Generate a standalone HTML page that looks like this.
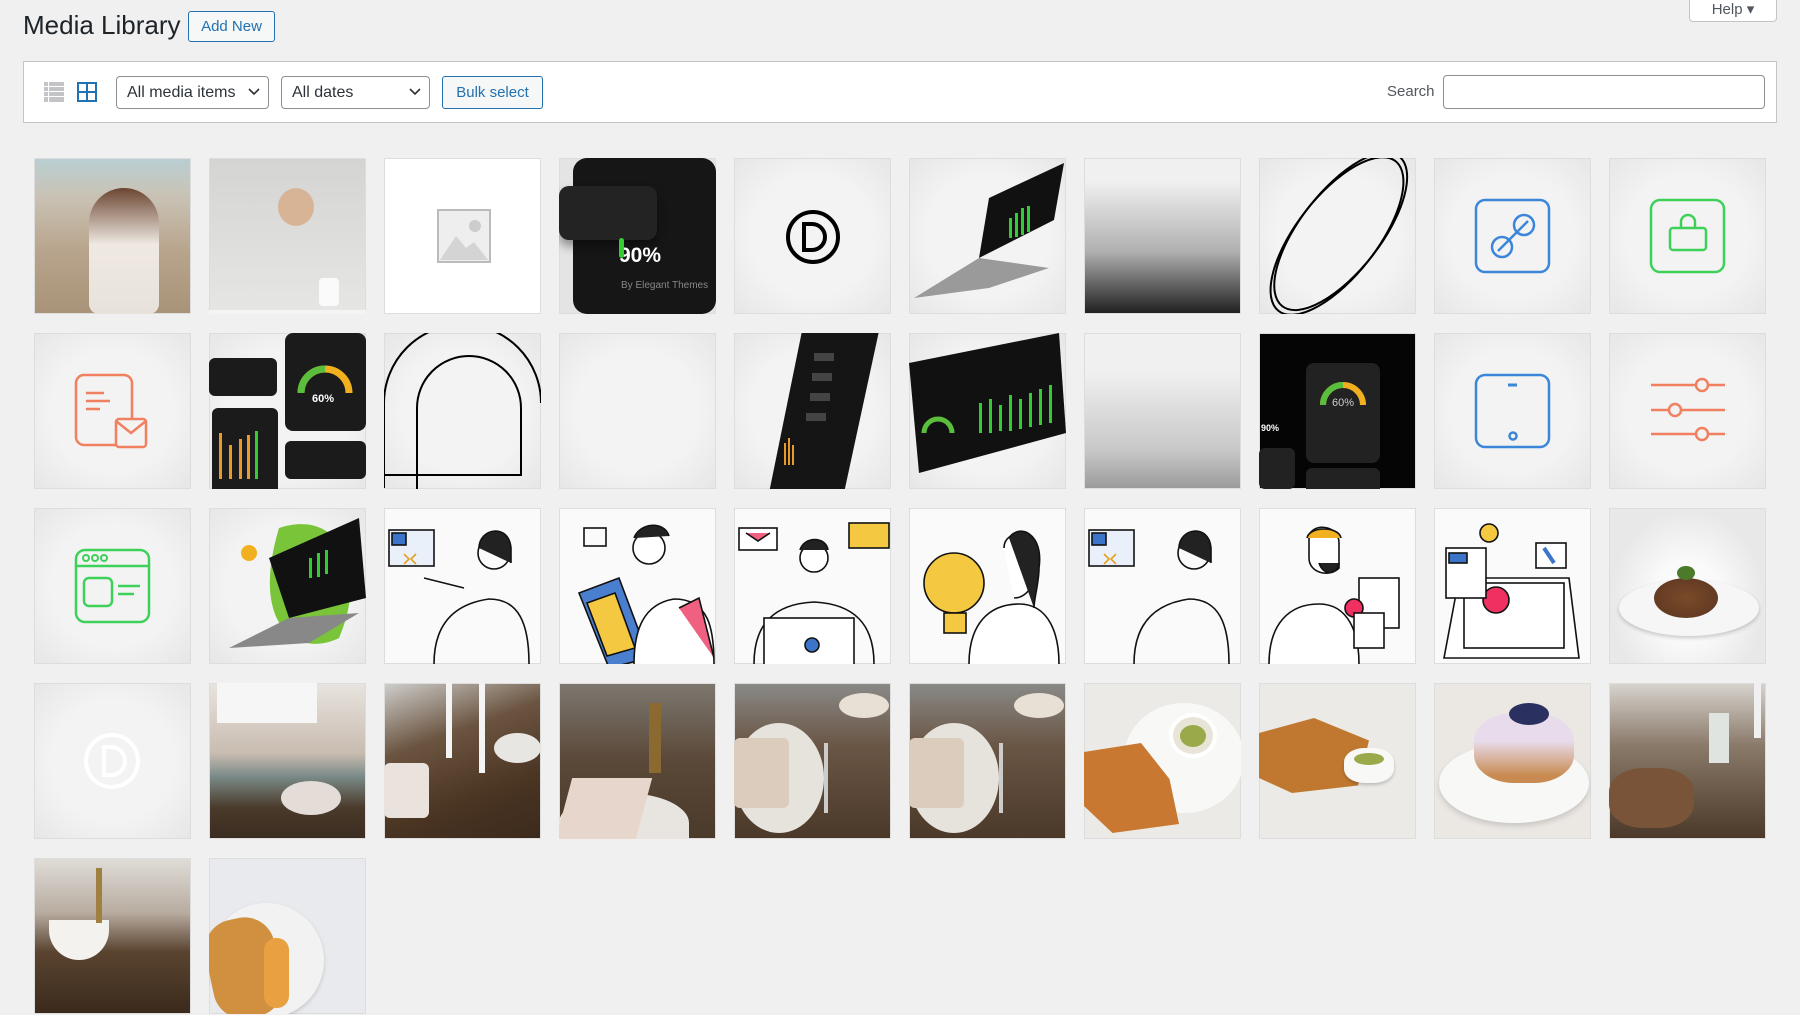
<!DOCTYPE html>
<html><head><meta charset="utf-8"><style>
*{box-sizing:border-box;margin:0;padding:0}
body{width:1800px;height:1015px;overflow:hidden;background:#f0f0f1;font-family:"Liberation Sans",sans-serif;position:relative;color:#1d2327}
.abs{position:absolute}
h1{position:absolute;left:23px;top:10px;font-size:26px;font-weight:400;color:#1d2327}
.btn{position:absolute;border:1.5px solid #2271b1;border-radius:3px;color:#2271b1;font-size:15px;display:flex;align-items:center;justify-content:center;background:#f6f7f7}
.help{position:absolute;left:1689px;top:-4px;width:88px;height:26px;background:#fff;border:1px solid #c3c4c7;border-radius:0 0 4px 4px;font-size:15px;color:#50575e;text-align:center;padding-top:3px}
.bar{position:absolute;left:23px;top:61px;width:1754px;height:62px;background:#fff;border:1px solid #c3c4c7}
.sel{position:absolute;top:76px;height:33px;border:1px solid #8c8f94;border-radius:4px;background:#fff;font-size:16px;color:#2c3338;padding:7px 0 0 10px}
.sel svg{position:absolute;right:8px;top:11px}
.t{position:absolute;width:157px;height:156px;overflow:hidden;background:#efefef;box-shadow:inset 0 0 0 1px #ddd}
.lt{background:radial-gradient(ellipse at center,#f3f3f3 55%,#e6e6e6 100%)}
</style></head><body>
<h1>Media Library</h1>
<div class="btn" style="left:188px;top:11px;width:87px;height:31px;font-size:15px">Add New</div>
<div class="help">Help ▾</div>
<div class="bar"></div>
<svg class="abs" style="left:44px;top:82px" width="20" height="20" viewBox="0 0 20 20"><g fill="#c3c4c7"><rect x="0" y="0" width="20" height="4"/><rect x="0" y="5" width="20" height="4"/><rect x="0" y="10" width="20" height="4"/><rect x="0" y="15" width="20" height="5"/></g><g fill="#fff"><rect x="4" y="0" width="1" height="20"/></g></svg>
<svg class="abs" style="left:77px;top:82px" width="20" height="20" viewBox="0 0 20 20"><rect x="1" y="1" width="18" height="18" fill="none" stroke="#2271b1" stroke-width="2"/><path d="M10 1V19M1 10H19" stroke="#2271b1" stroke-width="2"/></svg>
<div class="sel" style="left:116px;width:153px">All media items<svg width="12" height="8"><path d="M1 1l5 5 5-5" stroke="#2c3338" stroke-width="1.6" fill="none"/></svg></div>
<div class="sel" style="left:281px;width:149px">All dates<svg width="12" height="8"><path d="M1 1l5 5 5-5" stroke="#2c3338" stroke-width="1.6" fill="none"/></svg></div>
<div class="btn" style="left:442px;top:76px;width:101px;height:33px;font-size:15px">Bulk select</div>
<div class="abs" style="left:1387px;top:83px;font-size:15px;color:#50575e">Search</div>
<div class="abs" style="left:1443px;top:75px;width:322px;height:34px;border:1px solid #8c8f94;border-radius:4px;background:#fff"></div>

<!-- row 1 -->
<div class="t" style="left:34px;top:158px;background:linear-gradient(180deg,#b9cfd3 0%,#c9c2b4 25%,#b8a48c 60%,#a89378 100%)"><div class="abs" style="left:55px;top:30px;width:70px;height:126px;border-radius:35px 35px 10px 10px;background:linear-gradient(180deg,#6b4631 0%,#efe9e2 45%,#e8e2dc 100%)"></div></div>
<div class="t" style="left:209px;top:158px;background:linear-gradient(180deg,#d4d4d2,#e6e6e4)"><div class="abs" style="left:69px;top:30px;width:36px;height:38px;border-radius:50%;background:#d8b496"></div><div class="abs" style="left:110px;top:120px;width:20px;height:28px;border-radius:4px;background:#fafafa"></div><div class="abs" style="left:0;top:152px;width:157px;height:4px;background:#f4f4f4"></div></div>
<div class="t" style="left:384px;top:158px;background:#fff"><svg class="abs" style="left:52px;top:50px" width="56" height="56"><rect x="2" y="2" width="52" height="52" fill="#eee" stroke="#bbb" stroke-width="2"/><circle cx="39" cy="18" r="6" fill="#ccc"/><path d="M4 52L20 28 30 40 38 34 52 52Z" fill="#d4d4d4"/></svg></div>
<div class="t" style="left:559px;top:158px;background:#e4e4e4"><div class="abs" style="left:14px;top:0;width:143px;height:156px;border-radius:14px;background:#161616"></div><div class="abs" style="left:0;top:28px;width:98px;height:54px;border-radius:10px;background:#232323;box-shadow:0 6px 10px rgba(0,0,0,.4)"></div><div class="abs" style="left:60px;top:86px;color:#fff;font-weight:700;font-size:21px">90%</div><div class="abs" style="left:62px;top:122px;color:#888;font-size:10px">By Elegant Themes</div><div class="abs" style="left:60px;top:80px;width:5px;height:20px;background:#3c3;border-radius:3px"></div></div>
<div class="t lt" style="left:734px;top:158px"><svg class="abs" style="left:50px;top:50px" width="58" height="58"><circle cx="29" cy="29" r="25" fill="none" stroke="#000" stroke-width="4"/><path d="M20 16h8a13 13 0 0 1 0 26h-8z" fill="none" stroke="#000" stroke-width="4"/></svg></div>
<div class="t lt" style="left:909px;top:158px"><svg class="abs" width="157" height="156"><path d="M70 100L145 62 155 5 80 40Z" fill="#111"/><path d="M5 140L70 100 140 110 80 130Z" fill="#9a9a9a"/><g fill="#3c3"><rect x="100" y="60" width="3" height="20"/><rect x="106" y="55" width="3" height="24"/><rect x="112" y="50" width="3" height="27"/><rect x="118" y="48" width="3" height="26"/></g></svg></div>
<div class="t" style="left:1084px;top:158px;background:linear-gradient(180deg,#f0f0f0 15%,#b0b0b0 60%,#1e1e1e 100%)"></div>
<div class="t lt" style="left:1259px;top:158px"><svg width="157" height="156"><ellipse cx="78" cy="78" rx="40" ry="95" transform="rotate(38 78 78)" fill="none" stroke="#000" stroke-width="2"/><ellipse cx="78" cy="72" rx="40" ry="95" transform="rotate(38 78 78)" fill="none" stroke="#000" stroke-width="2"/></svg></div>
<div class="t lt" style="left:1434px;top:158px"><svg width="157" height="156"><rect x="42" y="42" width="73" height="72" rx="9" fill="none" stroke="#3b86d9" stroke-width="2.5"/><circle cx="90" cy="67" r="10" fill="none" stroke="#3b86d9" stroke-width="2.5"/><circle cx="68" cy="89" r="10" fill="none" stroke="#3b86d9" stroke-width="2.5"/><path d="M64 93L94 63" stroke="#3b86d9" stroke-width="2.5"/></svg></div>
<div class="t lt" style="left:1609px;top:158px"><svg width="157" height="156"><rect x="42" y="42" width="73" height="72" rx="9" fill="none" stroke="#3ed15a" stroke-width="2.5"/><rect x="61" y="70" width="36" height="22" rx="3" fill="none" stroke="#3ed15a" stroke-width="2.5"/><path d="M72 70v-6a7 7 0 0 1 14 0v6" fill="none" stroke="#3ed15a" stroke-width="2.5"/></svg></div>

<!-- row 2 -->
<div class="t lt" style="left:34px;top:333px"><svg width="157" height="156"><rect x="42" y="42" width="56" height="70" rx="8" fill="none" stroke="#f08060" stroke-width="2.5"/><path d="M52 60h18M52 68h24M52 76h14" stroke="#f08060" stroke-width="2.5"/><rect x="82" y="86" width="30" height="28" rx="3" fill="#f3f3f3" stroke="#f08060" stroke-width="2.5"/><path d="M82 88l15 12 15-12" fill="none" stroke="#f08060" stroke-width="2.5"/></svg></div>
<div class="t lt" style="left:209px;top:333px"><div class="abs" style="left:76px;top:0;width:81px;height:98px;background:#1b1b1b;border-radius:8px"></div><div class="abs" style="left:0;top:25px;width:68px;height:38px;background:#1b1b1b;border-radius:6px"></div><div class="abs" style="left:3px;top:75px;width:66px;height:120px;background:#1b1b1b;border-radius:6px"></div><div class="abs" style="left:76px;top:108px;width:81px;height:38px;background:#1b1b1b;border-radius:6px"></div><svg class="abs" width="157" height="156"><path d="M92 60a24 24 0 0 1 48 0" fill="none" stroke="#f0b020" stroke-width="7"/><path d="M92 60a24 24 0 0 1 24-24" fill="none" stroke="#5bbd3c" stroke-width="7"/><g fill="#e89a2a"><rect x="10" y="100" width="3" height="46"/><rect x="20" y="112" width="3" height="34"/><rect x="30" y="106" width="3" height="40"/><rect x="38" y="102" width="3" height="44"/></g><rect x="46" y="98" width="3" height="48" fill="#3c3"/></svg><div class="abs" style="left:103px;top:60px;color:#fff;font-size:11px;font-weight:700">60%</div></div>
<div class="t lt" style="left:384px;top:333px"><svg width="157" height="156"><path d="M0 155V70a68 68 0 0 1 157 0" fill="none" stroke="#000" stroke-width="2"/><path d="M0 142H137V75a52 52 0 0 0-104 0V156" fill="none" stroke="#000" stroke-width="2"/></svg></div>
<div class="t lt" style="left:559px;top:333px"></div>
<div class="t lt" style="left:734px;top:333px"><svg width="157" height="156"><path d="M35 160L68 -2 145 -2 110 160Z" fill="#151515"/><g fill="#e89a2a"><rect x="50" y="110" width="2" height="22"/><rect x="54" y="105" width="2" height="27"/><rect x="58" y="112" width="2" height="20"/></g><g fill="#444"><rect x="80" y="20" width="20" height="8"/><rect x="78" y="40" width="20" height="8"/><rect x="76" y="60" width="20" height="8"/><rect x="72" y="80" width="20" height="8"/></g></svg></div>
<div class="t lt" style="left:909px;top:333px"><svg width="157" height="156"><path d="M0 30L150 0 157 100 10 140Z" fill="#111"/><g fill="#3c3"><rect x="70" y="70" width="3" height="30"/><rect x="80" y="66" width="3" height="34"/><rect x="90" y="72" width="3" height="26"/><rect x="100" y="62" width="3" height="36"/><rect x="110" y="66" width="3" height="30"/><rect x="120" y="60" width="3" height="34"/><rect x="130" y="56" width="3" height="36"/><rect x="140" y="52" width="3" height="38"/></g><path d="M15 100a14 14 0 0 1 28 0" fill="none" stroke="#5bbd3c" stroke-width="5"/></svg></div>
<div class="t" style="left:1084px;top:333px;background:linear-gradient(180deg,#f0f0f0 25%,#c8c8c8 75%,#9a9a9a 100%)"></div>
<div class="t" style="left:1259px;top:333px;background:#050505"><div class="abs" style="left:47px;top:30px;width:74px;height:100px;background:#222;border-radius:8px"></div><div class="abs" style="left:0;top:115px;width:36px;height:41px;background:#222;border-radius:6px"></div><div class="abs" style="left:47px;top:135px;width:74px;height:30px;background:#222;border-radius:6px"></div><svg class="abs" width="157" height="156"><path d="M64 72a20 20 0 0 1 40 0" fill="none" stroke="#f0b020" stroke-width="6"/><path d="M64 72a20 20 0 0 1 20-20" fill="none" stroke="#5bbd3c" stroke-width="6"/></svg><div class="abs" style="left:73px;top:64px;color:#ccc;font-size:11px">60%</div><div class="abs" style="left:2px;top:90px;color:#fff;font-size:9px;font-weight:700">90%</div></div>
<div class="t lt" style="left:1434px;top:333px"><svg width="157" height="156"><rect x="42" y="42" width="73" height="72" rx="9" fill="none" stroke="#3b86d9" stroke-width="2.5"/><path d="M74 52h9" stroke="#3b86d9" stroke-width="3"/><circle cx="79" cy="103" r="3.5" fill="none" stroke="#3b86d9" stroke-width="2.5"/></svg></div>
<div class="t lt" style="left:1609px;top:333px"><svg width="157" height="156"><g stroke="#f08060" stroke-width="2.5" fill="#f2f2f2"><path d="M42 52h74M42 77h74M42 101h74"/><circle cx="93" cy="52" r="6"/><circle cx="66" cy="77" r="6"/><circle cx="93" cy="101" r="6"/></g></svg></div>

<!-- row 3 -->
<div class="t lt" style="left:34px;top:508px"><svg width="157" height="156"><rect x="42" y="42" width="73" height="72" rx="9" fill="none" stroke="#3ed15a" stroke-width="2.5"/><path d="M42 58h73" stroke="#3ed15a" stroke-width="2.5"/><circle cx="52" cy="50" r="3" fill="none" stroke="#3ed15a" stroke-width="2"/><circle cx="61" cy="50" r="3" fill="none" stroke="#3ed15a" stroke-width="2"/><circle cx="70" cy="50" r="3" fill="none" stroke="#3ed15a" stroke-width="2"/><rect x="50" y="70" width="28" height="28" rx="5" fill="none" stroke="#3ed15a" stroke-width="2.5"/><path d="M84 78h22M84 86h16" stroke="#3ed15a" stroke-width="2.5"/></svg></div>
<div class="t lt" style="left:209px;top:508px"><svg width="157" height="156"><path d="M70 20C130 0 160 60 130 130 90 150 40 120 70 20Z" fill="#7ac43a"/><path d="M60 50L150 10 157 90 80 110Z" fill="#111"/><path d="M20 140L80 110 150 105 100 135Z" fill="#888"/><circle cx="40" cy="45" r="8" fill="#f0b020"/><g fill="#3c3"><rect x="100" y="50" width="3" height="20"/><rect x="108" y="45" width="3" height="24"/><rect x="116" y="42" width="3" height="24"/></g></svg></div>
<div class="t" style="left:384px;top:508px;background:#fafafa"><svg width="157" height="156" fill="none" stroke="#111" stroke-width="1.6"><rect x="5" y="22" width="45" height="36" fill="#eaf0fa"/><rect x="8" y="25" width="14" height="12" fill="#3b74c9"/><path d="M20 46l5 5-5 5M32 46l-5 5 5 5" stroke="#e8a020"/><path d="M50 156c0-40 20-60 55-65 30 0 40 25 40 65"/><circle cx="110" cy="45" r="16"/><path d="M95 40c0-20 30-25 32 0v15" fill="#222"/><path d="M40 70l40 10"/></svg></div>
<div class="t" style="left:559px;top:508px;background:#fafafa"><svg width="157" height="156" fill="none" stroke="#111" stroke-width="1.6"><path d="M20 85l40-15 30 80-40 10Z" fill="#4a7fd0"/><path d="M28 95l28-10 20 55-28 8Z" fill="#f5c842"/><path d="M75 156c0-35 10-60 40-65 35 0 40 30 40 65" fill="#fff"/><path d="M120 100l20-10 15 60" fill="#f06080"/><circle cx="90" cy="40" r="16" fill="#fff"/><path d="M75 30c5-15 30-18 35-2" fill="#222"/><rect x="25" y="20" width="22" height="18"/></svg></div>
<div class="t" style="left:734px;top:508px;background:#fafafa"><svg width="157" height="156" fill="none" stroke="#111" stroke-width="1.6"><path d="M20 156c0-40 20-60 60-62 40 2 60 22 60 62"/><rect x="30" y="110" width="90" height="50" fill="#fff"/><circle cx="78" cy="137" r="7" fill="#3b74c9"/><circle cx="80" cy="50" r="14" fill="#fff"/><path d="M66 42c4-14 26-14 28 0" fill="#222"/><rect x="5" y="20" width="38" height="22" fill="#fff"/><path d="M12 25l12 8 12-8" fill="#f06080"/><rect x="115" y="15" width="40" height="25" fill="#f5c842"/></svg></div>
<div class="t" style="left:909px;top:508px;background:#fafafa"><svg width="157" height="156" fill="none" stroke="#111" stroke-width="1.6"><path d="M60 156c0-40 20-60 50-60 30 0 40 30 40 60" fill="#fff"/><circle cx="45" cy="75" r="30" fill="#f5c842"/><rect x="35" y="105" width="22" height="20" fill="#f5c842"/><path d="M95 40c0-20 35-20 35 10 0 20-10 40-25 40" fill="#fff"/><path d="M100 30c10-15 35-5 30 30 0 15-5 30-5 40" fill="#222"/></svg></div>
<div class="t" style="left:1084px;top:508px;background:#fafafa"><svg width="157" height="156" fill="none" stroke="#111" stroke-width="1.6"><rect x="5" y="22" width="45" height="36" fill="#eaf0fa"/><rect x="8" y="25" width="14" height="12" fill="#3b74c9"/><path d="M20 46l5 5-5 5M32 46l-5 5 5 5" stroke="#e8a020"/><path d="M50 156c0-40 20-60 55-65 30 0 40 25 40 65"/><circle cx="110" cy="45" r="16"/><path d="M95 40c0-20 30-25 32 0v15" fill="#222"/></svg></div>
<div class="t" style="left:1259px;top:508px;background:#fafafa"><svg width="157" height="156" fill="none" stroke="#111" stroke-width="1.6"><path d="M10 156c0-40 20-60 50-60 30 0 40 30 40 60" fill="#fff"/><path d="M50 30c0-15 30-15 30 5v25c-10 10-30 5-30-10z" fill="#fff"/><path d="M48 30c2-12 32-12 34 0" fill="#f0b020"/><path d="M60 55c5 15 20 10 20 0" fill="#222"/><rect x="100" y="70" width="40" height="50" fill="#fff"/><circle cx="95" cy="100" r="9" fill="#f03060"/><rect x="95" y="105" width="30" height="35" fill="#fff"/></svg></div>
<div class="t" style="left:1434px;top:508px;background:#fafafa"><svg width="157" height="156" fill="none" stroke="#111" stroke-width="1.6"><path d="M10 150L25 70H135L145 150Z" fill="#fff"/><rect x="30" y="75" width="100" height="65" fill="#fff"/><circle cx="62" cy="92" r="13" fill="#f03060"/><rect x="12" y="40" width="40" height="50" fill="#fff"/><rect x="15" y="45" width="18" height="10" fill="#3b74c9"/><circle cx="55" cy="25" r="9" fill="#f5c842"/><rect x="102" y="35" width="30" height="25" fill="#fff"/><path d="M110 40l10 15" stroke="#3b74c9" stroke-width="4"/></svg></div>
<div class="t" style="left:1609px;top:508px;background:radial-gradient(ellipse at 50% 60%,#fafafa 30%,#e8e8e8 70%)"><div class="abs" style="left:10px;top:72px;width:140px;height:56px;border-radius:50%;background:#f6f6f6;box-shadow:0 2px 4px rgba(0,0,0,.2)"></div><div class="abs" style="left:45px;top:70px;width:64px;height:40px;border-radius:50%;background:radial-gradient(#7a4a2a,#5a3520)"></div><div class="abs" style="left:68px;top:58px;width:18px;height:14px;background:#4a7a2a;border-radius:50%"></div></div>

<!-- row 4 -->
<div class="t lt" style="left:34px;top:683px"><svg width="157" height="156"><circle cx="78" cy="78" r="26" fill="none" stroke="#fff" stroke-width="4"/><path d="M70 64h7a14 14 0 0 1 0 28h-7z" fill="none" stroke="#fff" stroke-width="4"/></svg></div>
<div class="t" style="left:209px;top:683px;background:linear-gradient(180deg,#e8e4df 0%,#c9bcb0 45%,#7a8a88 60%,#4a3a2a 80%,#3a2c20 100%)"><div class="abs" style="left:8px;top:0;width:100px;height:40px;background:#f6f6f6"></div><div class="abs" style="left:72px;top:98px;width:60px;height:34px;border-radius:50%;background:#e4dcd6"></div></div>
<div class="t" style="left:384px;top:683px;background:linear-gradient(160deg,#cfcfcd 0%,#6b5440 35%,#4a3422 70%,#3b2a1c 100%)"><div class="abs" style="left:0;top:80px;width:45px;height:55px;background:#eae2dc;border-radius:6px"></div><div class="abs" style="left:62px;top:0;width:6px;height:75px;background:#f4f4f4"></div><div class="abs" style="left:95px;top:0;width:6px;height:90px;background:#f4f4f4"></div><div class="abs" style="left:110px;top:50px;width:47px;height:30px;background:#e8e6e2;border-radius:50%"></div></div>
<div class="t" style="left:559px;top:683px;background:linear-gradient(180deg,#7d7870 0%,#5a4838 50%,#4a3a2a 100%)"><div class="abs" style="left:0;top:110px;width:130px;height:60px;background:#e8e4df;border-radius:50% 50% 0 0"></div><div class="abs" style="left:5px;top:95px;width:80px;height:61px;background:#e6d6cc;transform:skewX(-15deg)"></div><div class="abs" style="left:90px;top:20px;width:12px;height:70px;background:#8a6a30"></div></div>
<div class="t" style="left:734px;top:683px;background:linear-gradient(180deg,#8a8a88 0%,#6a5645 40%,#4a3828 100%)"><div class="abs" style="left:0;top:40px;width:90px;height:110px;background:#e6e2dc;border-radius:50%"></div><div class="abs" style="left:0;top:55px;width:55px;height:70px;background:#dcccbe;border-radius:6px"></div><div class="abs" style="left:105px;top:10px;width:50px;height:25px;background:#e8e0d4;border-radius:50%"></div><div class="abs" style="left:90px;top:60px;width:4px;height:70px;background:#ccc"></div></div>
<div class="t" style="left:909px;top:683px;background:linear-gradient(180deg,#8a8a88 0%,#6a5645 40%,#4a3828 100%)"><div class="abs" style="left:0;top:40px;width:90px;height:110px;background:#e6e2dc;border-radius:50%"></div><div class="abs" style="left:0;top:55px;width:55px;height:70px;background:#dcccbe;border-radius:6px"></div><div class="abs" style="left:105px;top:10px;width:50px;height:25px;background:#e8e0d4;border-radius:50%"></div><div class="abs" style="left:90px;top:60px;width:4px;height:70px;background:#ccc"></div></div>
<div class="t" style="left:1084px;top:683px;background:#eceae6"><div class="abs" style="left:40px;top:20px;width:120px;height:110px;border-radius:50%;background:#f8f8f6"></div><div class="abs" style="left:85px;top:30px;width:48px;height:45px;border-radius:50%;background:#e8e4d8;border:4px solid #fff"></div><div class="abs" style="left:96px;top:42px;width:26px;height:22px;border-radius:50%;background:#9aaa4a"></div><div class="abs" style="left:0;top:60px;width:95px;height:90px;background:#c87830;clip-path:polygon(0 10%,60% 0,90% 40%,100% 90%,30% 100%,0 70%)"></div></div>
<div class="t" style="left:1259px;top:683px;background:#eceae6"><div class="abs" style="left:0;top:35px;width:110px;height:75px;background:#c07830;clip-path:polygon(0 20%,50% 0,100% 30%,90% 90%,30% 100%,0 80%)"></div><div class="abs" style="left:85px;top:65px;width:50px;height:35px;border-radius:40%;background:#f8f8f6;box-shadow:0 2px 3px rgba(0,0,0,.2)"></div><div class="abs" style="left:95px;top:70px;width:30px;height:12px;border-radius:50%;background:#9aaa4a"></div></div>
<div class="t" style="left:1434px;top:683px;background:#ebe8e4"><div class="abs" style="left:5px;top:60px;width:150px;height:80px;border-radius:50%;background:#f8f8f6;box-shadow:0 3px 6px rgba(0,0,0,.15)"></div><div class="abs" style="left:40px;top:30px;width:100px;height:70px;border-radius:40%;background:linear-gradient(180deg,#e8dcec 40%,#c88a50 90%)"></div><div class="abs" style="left:75px;top:20px;width:40px;height:22px;border-radius:50%;background:#2a3060"></div></div>
<div class="t" style="left:1609px;top:683px;background:linear-gradient(180deg,#d8d4cf 0%,#8a7a6a 40%,#4a3828 100%)"><div class="abs" style="left:0;top:85px;width:85px;height:60px;background:#7a5438;border-radius:40%"></div><div class="abs" style="left:145px;top:0;width:7px;height:55px;background:#f0f0f0"></div><div class="abs" style="left:100px;top:30px;width:20px;height:50px;background:#e0e4e0"></div></div>

<!-- row 5 -->
<div class="t" style="left:34px;top:858px;background:linear-gradient(180deg,#e0ddd8 0%,#b8aca0 35%,#5a4430 60%,#3a2a1c 100%)"><div class="abs" style="left:15px;top:62px;width:60px;height:40px;border-radius:0 0 30px 30px;background:#f4f2ee"></div><div class="abs" style="left:62px;top:10px;width:6px;height:55px;background:#a08040"></div></div>
<div class="t" style="left:209px;top:858px;background:#e8eaed"><div class="abs" style="left:0;top:45px;width:115px;height:115px;border-radius:50%;background:#f2f2f2;box-shadow:0 2px 4px rgba(0,0,0,.15)"></div><div class="abs" style="left:0;top:60px;width:70px;height:100px;background:#d09040;border-radius:30px;transform:rotate(-12deg)"></div><div class="abs" style="left:55px;top:80px;width:25px;height:70px;background:#e8a040;border-radius:12px"></div></div>
</body></html>
